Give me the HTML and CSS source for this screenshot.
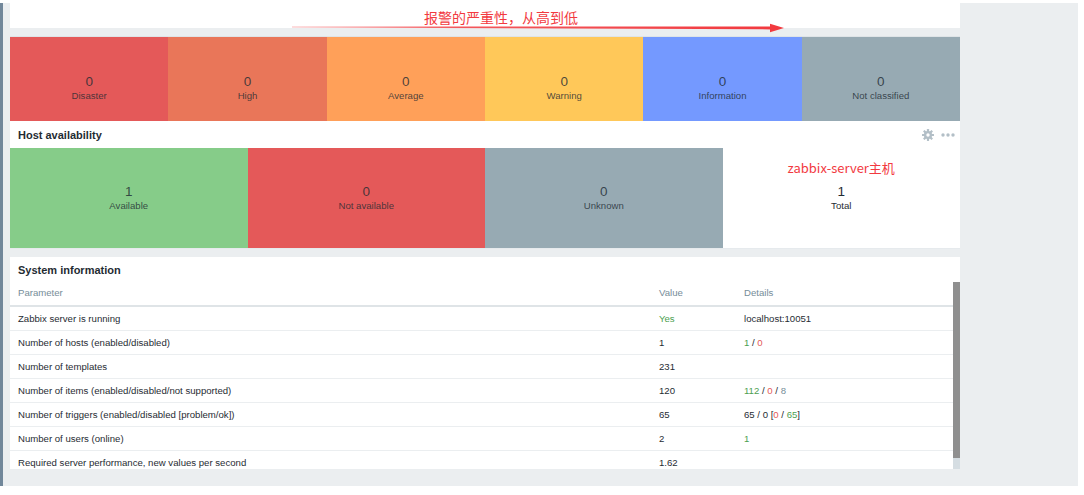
FILE: index.html
```html
<!DOCTYPE html>
<html lang="zh-CN">
<head>
<meta charset="utf-8">
<title>Dashboard</title>
<link rel="stylesheet" href="styles.css">
</head>
<body>
<div class="frame">
  <div class="column">
    <div class="top-panel">
      <span class="note note-top">报警的严重性，从高到低</span>
    </div>

    <div class="widget severity">
      <div class="sev disaster"><span class="num">0</span><span class="lbl">Disaster</span></div>
      <div class="sev high"><span class="num">0</span><span class="lbl">High</span></div>
      <div class="sev average"><span class="num">0</span><span class="lbl">Average</span></div>
      <div class="sev warning"><span class="num">0</span><span class="lbl">Warning</span></div>
      <div class="sev info"><span class="num">0</span><span class="lbl">Information</span></div>
      <div class="sev nc"><span class="num">0</span><span class="lbl">Not classified</span></div>
    </div>

    <div class="widget hosts">
      <div class="widget-head">
        <span class="widget-title">Host availability</span>
        <span class="head-icons">
          <svg class="gear" width="12" height="12" viewBox="0 0 12 12" aria-hidden="true">
            <g fill="#b3bfc7">
              <rect x="4.9" y="0" width="2.2" height="12" rx="0.4"/>
              <rect x="4.9" y="0" width="2.2" height="12" rx="0.4" transform="rotate(45 6 6)"/>
              <rect x="4.9" y="0" width="2.2" height="12" rx="0.4" transform="rotate(90 6 6)"/>
              <rect x="4.9" y="0" width="2.2" height="12" rx="0.4" transform="rotate(135 6 6)"/>
              <circle cx="6" cy="6" r="4.1"/>
            </g>
            <circle cx="6" cy="6" r="1.7" fill="#fff"/>
          </svg>
          <svg class="dots" width="14" height="4" viewBox="0 0 14 4" aria-hidden="true">
            <g fill="#b3bfc7">
              <circle cx="2" cy="2" r="1.7"/>
              <circle cx="7" cy="2" r="1.7"/>
              <circle cx="12" cy="2" r="1.7"/>
            </g>
          </svg>
        </span>
      </div>
      <div class="host-row">
        <div class="hcell available"><span class="num">1</span><span class="lbl">Available</span></div>
        <div class="hcell notavail"><span class="num">0</span><span class="lbl">Not available</span></div>
        <div class="hcell unknown"><span class="num">0</span><span class="lbl">Unknown</span></div>
        <div class="hcell total">
          <span class="note note-host">zabbix-server主机</span>
          <span class="num">1</span><span class="lbl">Total</span>
        </div>
      </div>
    </div>

    <div class="widget sysinfo">
      <div class="sys-title">System information</div>
      <div class="sys-body">
        <div class="sys-table">
          <div class="trow thead">
            <span class="c1">Parameter</span><span>Value</span><span>Details</span>
          </div>
          <div class="trow">
            <span class="c1">Zabbix server is running</span><span class="green">Yes</span><span>localhost:10051</span>
          </div>
          <div class="trow">
            <span class="c1">Number of hosts (enabled/disabled)</span><span>1</span><span><span class="green">1</span> / <span class="red">0</span></span>
          </div>
          <div class="trow">
            <span class="c1">Number of templates</span><span>231</span><span></span>
          </div>
          <div class="trow">
            <span class="c1">Number of items (enabled/disabled/not supported)</span><span>120</span><span><span class="green">112</span> / <span class="red">0</span> / <span class="grey">8</span></span>
          </div>
          <div class="trow">
            <span class="c1">Number of triggers (enabled/disabled [problem/ok])</span><span>65</span><span>65 / 0 [<span class="red">0</span> / <span class="green">65</span>]</span>
          </div>
          <div class="trow">
            <span class="c1">Number of users (online)</span><span>2</span><span class="green">1</span>
          </div>
          <div class="trow">
            <span class="c1">Required server performance, new values per second</span><span>1.62</span><span></span>
          </div>
        </div>
        <div class="scrollbar">
          <div class="thumb"></div>
          <div class="track"></div>
        </div>
      </div>
    </div>
  </div>
</div>

<svg class="arrow" width="1084" height="40" viewBox="0 0 1084 40" aria-hidden="true">
  <defs>
    <linearGradient id="fade" x1="292" y1="0" x2="772" y2="0" gradientUnits="userSpaceOnUse">
      <stop offset="0" stop-color="#f23a3f" stop-opacity="0.35"/>
      <stop offset="0.35" stop-color="#f23a3f" stop-opacity="0.85"/>
      <stop offset="1" stop-color="#f23a3f" stop-opacity="1"/>
    </linearGradient>
  </defs>
  <polygon points="292,26.6 772,26.4 772,29.4 292,27.5" fill="url(#fade)"/>
  <polygon points="770,23.8 784,28 770,32.2" fill="#f23a3f"/>
</svg>
</body>
</html>
```

FILE: styles.css
```css
* {
  box-sizing: border-box;
}

html, body {
  margin: 0;
  padding: 0;
  background: #ffffff;
}

body {
  width: 1084px;
  height: 495px;
  overflow: hidden;
  position: relative;
  font-family: "Liberation Sans", Arial, sans-serif;
  font-size: 9.6px;
  color: #1f2c33;
}

.frame {
  margin-top: 3px;
  width: 1078px;
  height: 483px;
  background: #ebeef0;
  border-left: 3px solid #71879a;
  padding-left: 7px;
}

.column {
  width: 950px;
  display: flex;
  flex-direction: column;
}

/* top annotation panel */
.top-panel {
  height: 25px;
  background: #ffffff;
  padding-left: 414px;
  padding-top: 7px;
  margin-bottom: 8px;
}

.note {
  font-family: "Noto Sans CJK SC", "Liberation Sans", sans-serif;
  color: #f23a3f;
  white-space: nowrap;
}

.note-top {
  display: block;
  font-size: 14px;
  line-height: 14px;
}

.widget {
  background: #ffffff;
}

/* severity */
.severity {
  border-top: 1px solid #dfe4e7;
  display: grid;
  grid-template-columns: repeat(6, 1fr);
  height: 85px;
}

.sev {
  display: flex;
  flex-direction: column;
  align-items: center;
  justify-content: center;
  padding-top: 18px;
}

.num {
  font-size: 13.5px;
  line-height: 15px;
  color: rgba(31, 44, 51, 0.82);
}

.lbl {
  font-size: 9.6px;
  line-height: 13px;
  color: rgba(31, 44, 51, 0.82);
}

.disaster { background: #e45959; }
.high { background: #e97659; }
.average { background: #ffa059; }
.warning { background: #ffc859; }
.info { background: #7499ff; }
.nc { background: #97aab3; }

/* host availability */
.hosts {
  margin-bottom: 8px;
}

.widget-head {
  height: 27px;
  display: flex;
  align-items: center;
  justify-content: space-between;
  padding: 0 5px 0 8px;
}

.widget-title {
  font-size: 11px;
  font-weight: bold;
  color: #1f2c33;
}

.head-icons {
  display: flex;
  align-items: center;
  gap: 7px;
}

.gear, .dots {
  display: block;
}

.host-row {
  display: grid;
  grid-template-columns: repeat(4, 1fr);
  height: 101px;
  border-bottom: 1px solid #e6eaed;
}

.hcell {
  position: relative;
  display: flex;
  flex-direction: column;
  align-items: center;
  justify-content: center;
}

.available { background: #86cc89; }
.notavail { background: #e45959; }
.unknown { background: #97aab3; }
.total { background: #ffffff; }

.total .num, .total .lbl {
  color: #1f2c33;
}

.note-host {
  position: absolute;
  left: 0;
  right: 0;
  top: 11px;
  text-align: center;
  font-size: 13px;
  line-height: 18px;
}

/* system information */
.sysinfo {
  height: 212px;
  overflow: hidden;
  display: flex;
  flex-direction: column;
}

.sys-title {
  height: 25px;
  flex: none;
  padding: 7px 0 0 8px;
  font-size: 11px;
  line-height: 13px;
  font-weight: bold;
}

.sys-body {
  flex: 1;
  display: flex;
  min-height: 0;
}

.sys-table {
  flex: 1;
  overflow: hidden;
}

.trow {
  display: grid;
  grid-template-columns: 649px 85px 1fr;
  height: 24px;
  align-items: center;
  border-bottom: 1px solid #ebeef0;
  line-height: 12px;
  white-space: nowrap;
}

.trow .c1 {
  padding-left: 8px;
}

.thead {
  height: 25px;
  padding-bottom: 2px;
  border-bottom: 2px solid #dfe4e7;
  color: #768d99;
}

.green { color: #4e9f51; }
.red { color: #e45959; }
.grey { color: #768d99; }

.scrollbar {
  width: 7px;
  flex: none;
  display: flex;
  flex-direction: column;
}

.thumb {
  height: 176px;
  background: #8f8f8f;
}

.track {
  flex: 1;
  background: #d5dde2;
}

/* annotation arrow overlay */
.arrow {
  position: absolute;
  left: 0;
  top: 0;
  pointer-events: none;
}
```
